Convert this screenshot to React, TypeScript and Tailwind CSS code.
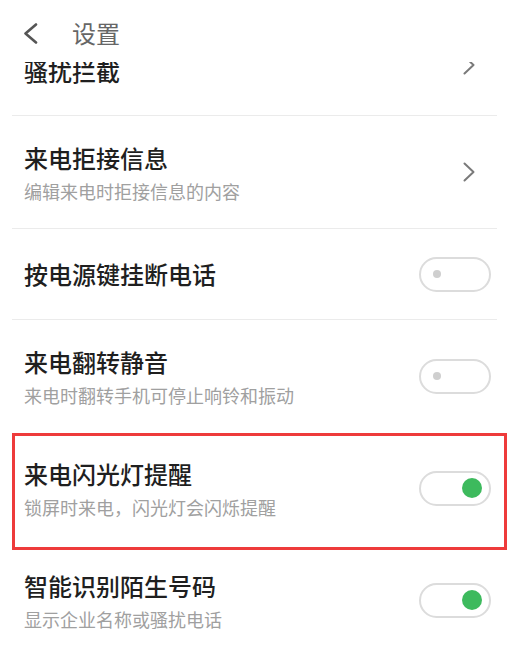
import React from "react";

const FONT = { fontFamily: '"Noto Sans CJK SC", "Noto Sans", sans-serif' };

function Chevron() {
  return (
    <svg width="12" height="20" viewBox="0 0 12 20" className="shrink-0">
      <polyline points="1.5,1.5 10.5,10 1.5,18.5" fill="none" stroke="#7a7a7a" strokeWidth="2" strokeLinecap="round" strokeLinejoin="round" />
    </svg>
  );
}

function Toggle({ on }: { on: boolean }) {
  return (
    <div className="w-[72px] h-[35px] rounded-full border-2 border-[#dcdcdc] bg-white flex items-center shrink-0">
      {on ? (
        <div className="ml-auto mr-[7px] w-[20px] h-[20px] rounded-full bg-[#3dba5d]" />
      ) : (
        <div className="ml-[12px] w-[8px] h-[8px] rounded-full bg-[#cfcfcf]" />
      )}
    </div>
  );
}

function Divider() {
  return <div className="ml-[12px] mr-[23px] h-px shrink-0 bg-[#ebebeb]" />;
}

function Row({
  title,
  sub,
  right,
  highlight,
}: {
  title: string;
  sub?: string;
  right: React.ReactNode;
  highlight?: boolean;
}) {
  return (
    <div className={`relative shrink-0 flex items-center ${sub ? "h-[112px]" : "h-[90px]"}`}>
      <div className={`flex-1 pl-[24px] flex flex-col ${sub ? "self-start pt-[28px]" : ""}`}>
        <div className="text-[24px] leading-[28px] font-medium text-[#1f1f1f]">{title}</div>
        {sub && <div className="mt-[7px] text-[18px] leading-[24px] text-[#a0a0a0]">{sub}</div>}
      </div>
      {right}
      {highlight && (
        <div className="absolute left-[12px] right-[13px] top-[1px] bottom-[-6px] border-[3px] border-[#ee3b3b] pointer-events-none" />
      )}
    </div>
  );
}

export default function App() {
  return (
    <div className="w-[520px] h-[648px] bg-white overflow-hidden flex flex-col" style={FONT}>
      <div className="h-[62px] pt-[4px] flex items-center shrink-0 bg-white relative z-10">
        <div className="ml-[23px]">
          <svg width="15" height="21" viewBox="0 0 15 21">
            <polyline points="13,1.5 2.5,10.5 13,19.5" fill="none" stroke="#555555" strokeWidth="2.6" strokeLinecap="round" strokeLinejoin="round" />
          </svg>
        </div>
        <div className="ml-[34px] text-[24px] leading-[28px] text-[#666666]">设置</div>
      </div>
      <div className="flex-1 overflow-hidden flex flex-col">
        <div className="mt-[-5px] h-[58px] shrink-0 flex items-start">
          <div className="flex-1 pl-[24px] text-[24px] leading-[28px] font-medium text-[#1f1f1f]">骚扰拦截</div>
          <div className="mr-[45px] mt-[-2px]">
            <Chevron />
          </div>
        </div>
        <Divider />
        <Row
          title="来电拒接信息"
          sub="编辑来电时拒接信息的内容"
          right={
            <div className="mr-[45px]">
              <Chevron />
            </div>
          }
        />
        <Divider />
        <Row title="按电源键挂断电话" right={<div className="mr-[29px]"><Toggle on={false} /></div>} />
        <Divider />
        <Row
          title="来电翻转静音"
          sub="来电时翻转手机可停止响铃和振动"
          right={<div className="mr-[29px]"><Toggle on={false} /></div>}
        />
        <Row
          title="来电闪光灯提醒"
          sub="锁屏时来电，闪光灯会闪烁提醒"
          right={<div className="mr-[29px]"><Toggle on={true} /></div>}
          highlight
        />
        <Row
          title="智能识别陌生号码"
          sub="显示企业名称或骚扰电话"
          right={<div className="mr-[29px]"><Toggle on={true} /></div>}
        />
      </div>
    </div>
  );
}
